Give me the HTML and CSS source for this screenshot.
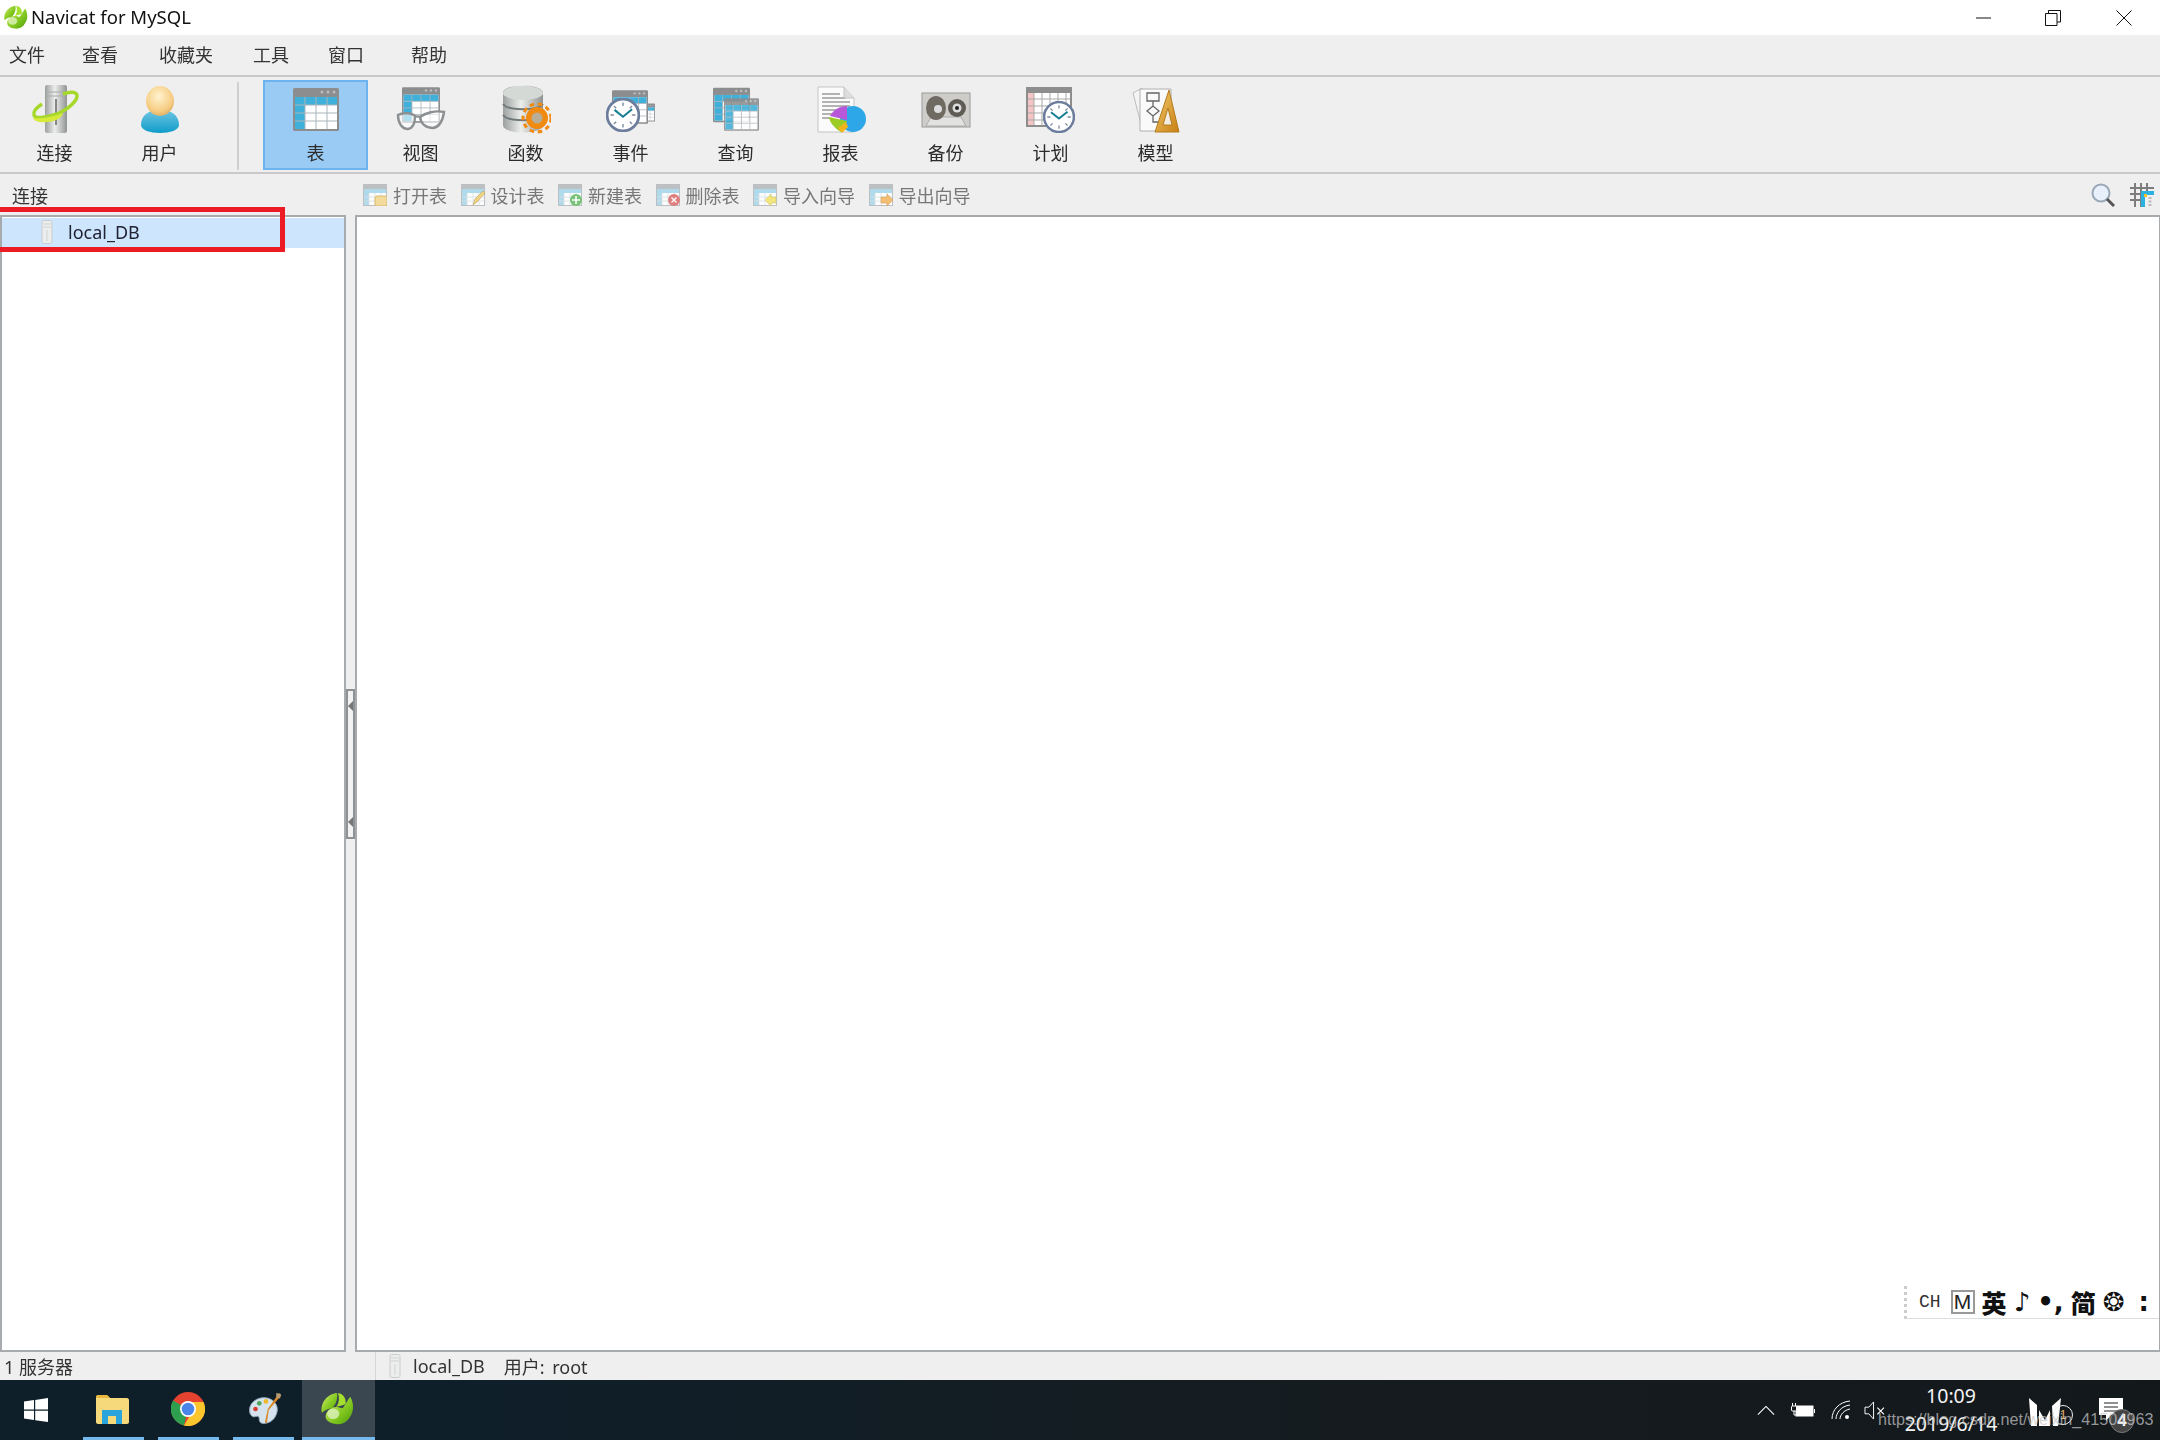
FILE: index.html
```html
<!DOCTYPE html>
<html lang="zh-CN">
<head>
<meta charset="utf-8">
<title>Navicat for MySQL</title>
<link rel="stylesheet" href="styles.css">
</head>
<body>
<svg class="defs" width="0" height="0" aria-hidden="true">
  <defs>
    <linearGradient id="steel" x1="0" x2="1" y1="0" y2="0">
      <stop offset="0" stop-color="#9b9f9d"/><stop offset=".45" stop-color="#eceeec"/><stop offset="1" stop-color="#8f9391"/>
    </linearGradient>
    <radialGradient id="peach" cx=".45" cy=".35" r=".7">
      <stop offset="0" stop-color="#fff3cf"/><stop offset=".7" stop-color="#f6cd83"/><stop offset="1" stop-color="#d9a860"/>
    </radialGradient>
    <linearGradient id="shoulder" x1="0" x2="0" y1="0" y2="1">
      <stop offset="0" stop-color="#6fc5e2"/><stop offset="1" stop-color="#0f9cc9"/>
    </linearGradient>
    <linearGradient id="leaf" x1="0" x2="1" y1="0" y2="1">
      <stop offset="0" stop-color="#d5f06a"/><stop offset=".6" stop-color="#7fc61d"/><stop offset="1" stop-color="#4e9a10"/>
    </linearGradient>
    <linearGradient id="ruler" x1="0" x2="1" y1="0" y2="1">
      <stop offset="0" stop-color="#f2cb6b"/><stop offset="1" stop-color="#c87f12"/>
    </linearGradient>
    <symbol id="tbl" viewBox="0 0 46 43">
      <rect width="46" height="43" rx="1.5" fill="#8b8d8e"/>
      <g fill="#bdbdbd"><circle cx="29" cy="4" r="1.5"/><circle cx="35" cy="4" r="1.5"/><circle cx="41" cy="4" r="1.5"/></g>
      <rect x="2" y="9" width="42" height="32" fill="#fff"/>
      <rect x="2" y="9" width="42" height="8" fill="#3fb0da"/>
      <rect x="2" y="17" width="10" height="24" fill="#3fb0da"/>
      <path d="M12 9v32M23 9v32M34 9v32M2 17h42M2 25h42M2 33h42" stroke="#a9b4ba" stroke-width="1" fill="none"/>
    </symbol>
    <symbol id="clock" viewBox="0 0 30 30">
      <circle cx="15" cy="15" r="14" fill="#fff" stroke="#6b7c9c" stroke-width="2.4"/>
      <path d="M15 4v3M15 23v3M4 15h3M23 15h3M7 7l2 2M23 7l-2 2M7 23l2-2M23 23l-2-2" stroke="#7d8aa0" stroke-width="1.2"/>
      <path d="M7.500 10.500 15 16.500 23 10" stroke="#167f93" stroke-width="1.800" fill="none"/>
    </symbol>
    <symbol id="navileaf" viewBox="0 0 36 36">
      <path d="M2 22C0 11 8 2 18 1c1 6-1 12-5 16-4 1-8 2-11 5z" fill="url(#leaf)"/>
      <path d="M19 1c6 1 9 6 8 12-3 1-7 2-10 3 3-4 4-9 2-15z" fill="#a6e02e"/>
      <path d="M32 5c4 7 4 15 0 21-3 6-9 9-15 8C7 33 4 27 7 22c3-5 8-7 12-6 3 1 5 2 6 0 2-3 4-7 7-11z" fill="url(#leaf)"/>
      <ellipse cx="14" cy="23" rx="6.500" ry="5.500" fill="#e8f6d2" opacity=".7"/>
    </symbol>
    <symbol id="mini" viewBox="0 0 24 22">
      <rect width="24" height="22" fill="#b4b8ba"/>
      <rect x="1" y="5" width="22" height="16" fill="#fff"/>
      <rect x="1" y="5" width="22" height="4" fill="#a3d6ea"/>
      <rect x="1" y="9" width="5" height="12" fill="#a3d6ea"/>
      <path d="M6 9v12M12 9v12M18 9v12M1 13h22M1 17h22" stroke="#d5dde0" stroke-width=".8"/>
    </symbol>
    <symbol id="server-mini" viewBox="0 0 12 24">
      <rect x="1" y="0.500" width="10" height="23" rx="1.500" fill="#eceeee" stroke="#c9cccc"/>
      <path d="M2 4h8M2 7h8M6 10v11" stroke="#d0d3d3"/>
    </symbol>
  </defs>
</svg>

<div class="window">
  <header class="titlebar">
    <svg class="title-logo" viewBox="0 0 36 36"><use href="#navileaf"/></svg>
    <span class="title-text">Navicat for MySQL</span>
    <div class="win-controls">
      <svg class="wc wc-min" viewBox="0 0 16 16"><path d="M0 8h15" stroke="#111" fill="none"/></svg>
      <svg class="wc wc-max" viewBox="0 0 16 16"><path d="M.5 3.500h11.500v12H.5zM3.500 3.500V.5h12v11.500H12" stroke="#111" fill="none"/></svg>
      <svg class="wc wc-close" viewBox="0 0 16 16"><path d="M.5.5l15 15M15.500.5l-15 15" stroke="#111" fill="none"/></svg>
    </div>
  </header>

  <nav class="menubar">
    <span>文件</span><span>查看</span><span>收藏夹</span><span>工具</span><span>窗口</span><span>帮助</span>
  </nav>

  <div class="toolbar">
    <button class="tool">
      <svg viewBox="0 0 50 50"><rect x="15" y="1" width="22" height="48" rx="2" fill="url(#steel)"/><path d="M16 8h20M16 12h20" stroke="#a8acaa"/><path d="M26 15v26" stroke="#666" stroke-width="1.500"/><path d="M33 10c8-3 13-2 14 1 1 5-8 14-20 19-12 4-22 5-23 1-1-3 2-7 8-11" fill="none" stroke="#a6d82b" stroke-width="3.500"/><path d="M3 34c8 1 20-1 30-5-1 5-7 8-15 9-7 1-13 0-15-4z" fill="#d6ea3a"/></svg>
      <span>连接</span>
    </button>
    <button class="tool">
      <svg viewBox="0 0 50 50"><path d="M6 41c0-10 8-15 19-15s19 5 19 15c0 5-9 8-19 8S6 46 6 41z" fill="url(#shoulder)"/><ellipse cx="25" cy="17" rx="14" ry="15" fill="url(#peach)"/></svg>
      <span>用户</span>
    </button>
    <div class="tool-sep"></div>
    <button class="tool tool-active">
      <svg viewBox="0 0 50 50"><use href="#tbl" x="2" y="4" width="46" height="43"/></svg>
      <span>表</span>
    </button>
    <button class="tool">
      <svg viewBox="0 0 50 50"><use href="#tbl" x="6" y="3" width="38" height="36"/><g fill="#fff" fill-opacity=".6" stroke="#8c9092" stroke-width="2.400"><path d="M2 31c5-3 14-2 17 1 0 6-1 12-7 13-6 0-10-6-10-14z"/><path d="M24 33c5-4 16-7 24-5-1 7-4 15-11 16-7 0-12-4-13-11z"/><path d="M19 33c2-1 3-1 5 0" fill="none"/></g></svg>
      <span>视图</span>
    </button>
    <button class="tool">
      <svg viewBox="0 0 50 50"><path d="M2 9c0-10 40-10 40 0v32c0 10-40 10-40 0z" fill="url(#steel)"/><ellipse cx="22" cy="9" rx="20" ry="7" fill="#d5d9d6"/><path d="M2 20c5 7 35 7 40 0M2 31c5 7 35 7 40 0" stroke="#70787a" stroke-width="2" fill="none"/><circle cx="36" cy="34" r="11" fill="#f08a10"/><circle cx="36" cy="34" r="14" fill="none" stroke="#f08a10" stroke-width="3" stroke-dasharray="4.500 3.800"/><circle cx="36" cy="34" r="5.500" fill="#b8ad96"/></svg>
      <span>函数</span>
    </button>
    <button class="tool">
      <svg viewBox="0 0 50 50"><use href="#tbl" x="30" y="12" width="19" height="33"/><use href="#tbl" x="6" y="2" width="36" height="42"/><use href="#clock" x="0" y="14" width="34" height="34"/></svg>
      <span>事件</span>
    </button>
    <button class="tool">
      <svg viewBox="0 0 50 50"><use href="#tbl" x="2" y="3" width="37" height="36"/><use href="#tbl" x="13" y="14" width="35" height="33" opacity=".88"/></svg>
      <span>查询</span>
    </button>
    <button class="tool">
      <svg viewBox="0 0 50 50"><path d="M2 3h26l10 11v34H2z" fill="#fbfbfb" stroke="#c4c4c4"/><path d="M6 10h18M6 14h24M6 18h28M6 22h28M6 26h20M6 30h12M6 34h8" stroke="#6a6a6a" stroke-width="1"/><path d="M28 3v11h10" fill="#ddd" stroke="#c4c4c4"/><ellipse cx="37" cy="35" rx="13" ry="13" fill="#2da7e8"/><path d="M31 22c-7 0-14 4-17 10l17 4z" fill="#b658d8"/><path d="M13 33l18 4-6 11c-5-3-11-8-12-15z" fill="#9ccb24"/><path d="M22 44l8-6 2 5-6 6z" fill="#f1b41c"/></svg>
      <span>报表</span>
    </button>
    <button class="tool">
      <svg viewBox="0 0 50 50"><rect x="1" y="9" width="48" height="34" fill="#cfcdc9" stroke="#9a9a9a"/><path d="M5 42l5-9h30l5 9z" fill="#e2e2e0" stroke="#aaa"/><ellipse cx="15" cy="24" rx="10" ry="12" fill="#6f6a62"/><circle cx="17" cy="25" r="4" fill="#ddd"/><circle cx="36" cy="24" r="9" fill="#5f5b55"/><circle cx="36" cy="24" r="4.500" fill="#ddd"/><circle cx="36" cy="24" r="2" fill="#222"/></svg>
      <span>备份</span>
    </button>
    <button class="tool">
      <svg viewBox="0 0 50 50"><rect x="1" y="4" width="44" height="38" fill="#fff" stroke="#8d8d8d" stroke-width="2"/><rect x="1" y="3" width="44" height="6" fill="#8d8d8d"/><rect x="2" y="9" width="6" height="32" fill="#f5c4c4"/><path d="M8 9v32M16 9v32M24 9v32M32 9v32M40 9v32M2 15h42M2 22h42M2 29h42M2 36h42" stroke="#a9a9a9"/><use href="#clock" x="17" y="17" width="32" height="32"/></svg>
      <span>计划</span>
    </button>
    <button class="tool">
      <svg viewBox="0 0 50 50"><path d="M2 9l9-5 6 42-6-2z" fill="#f4f4f4" stroke="#bbb"/><path d="M9 5h31v42H9z" fill="#fafafa" stroke="#b0b0b0"/><path d="M16 9h12v8H16zM22 17v5M16 27l6-5 6 5-6 5zM22 32v6h8" fill="none" stroke="#666" stroke-width="1.300"/><path d="M38 6l10 42H24z" fill="url(#ruler)" stroke="#b47c20"/><path d="M37 24l4 17h-9z" fill="#f2ede0" stroke="#b47c20"/></svg>
      <span>模型</span>
    </button>
  </div>

  <div class="subbar">
    <div class="sub-label">连接</div>
    <div class="actions">
      <span class="action"><svg viewBox="0 0 24 22"><use href="#mini"/><rect x="12" y="12" width="12" height="10" rx="2" fill="#f4d88e" stroke="#d5b35f"/></svg>打开表</span>
      <span class="action"><svg viewBox="0 0 24 22"><use href="#mini"/><path d="M12 21l2-6 8-8 2 2-8 9z" fill="#f0cf6f" stroke="#b99a4b" stroke-width=".7"/></svg>设计表</span>
      <span class="action"><svg viewBox="0 0 24 22"><use href="#mini"/><circle cx="18" cy="16" r="6" fill="#62bb63"/><path d="M18 12v8M14 16h8" stroke="#fff" stroke-width="1.600"/></svg>新建表</span>
      <span class="action"><svg viewBox="0 0 24 22"><use href="#mini"/><circle cx="18" cy="16" r="6" fill="#dc6a6a"/><path d="M15.500 13.500l5 5M20.500 13.500l-5 5" stroke="#fff" stroke-width="1.400"/></svg>删除表</span>
      <span class="action"><svg viewBox="0 0 24 22"><use href="#mini"/><path d="M12 16l6-6v3h5v6h-5v3z" fill="#f3e36c" stroke="#cfbd4a" stroke-width=".6"/></svg>导入向导</span>
      <span class="action"><svg viewBox="0 0 24 22"><use href="#mini"/><path d="M24 16l-6-6v3h-6v6h6v3z" fill="#f4b45e" stroke="#d29340" stroke-width=".6"/></svg>导出向导</span>
    </div>
    <div class="sub-tools">
      <svg viewBox="0 0 24 24"><circle cx="10" cy="10" r="8.500" fill="#e8f0fb" stroke="#9aa8b8" stroke-width="2"/><path d="M16 16l7 7" stroke="#555" stroke-width="3"/></svg>
      <svg viewBox="0 0 24 24"><path d="M5 0v24M11 0v24M17 0v8M0 5h24M0 11h12M0 17h12" stroke="#7d7d7d" stroke-width="2"/><path d="M11 8h13v4H15v12h-4z" fill="#2cb2e0"/><rect x="14" y="11" width="3" height="3" fill="#f3c327"/><path d="M20 14v9" stroke="#bbb" stroke-width="3" stroke-dasharray="2 1.500"/></svg>
    </div>
  </div>

  <main class="workspace">
    <aside class="tree">
      <div class="tree-row">
        <svg viewBox="0 0 12 24"><use href="#server-mini"/></svg>
        <span>local_DB</span>
      </div>
      <div class="highlight"></div>
    </aside>
    <div class="splitter-col">
      <div class="splitter">
        <i class="arrow"></i><i class="arrow"></i>
      </div>
    </div>
    <section class="content">
      <div class="ime">
        <span class="ime-ch">CH</span>
        <span class="ime-m">M</span>
        <span class="ime-b">英</span>
        <span class="ime-s">♪</span>
        <span class="ime-s">•,</span>
        <span class="ime-b">简</span>
        <span class="ime-s">❂</span>
        <span class="ime-s ime-end">:</span>
      </div>
    </section>
  </main>

  <footer class="statusbar">
    <span class="status-count">1 服务器</span>
    <div class="status-info">
      <svg viewBox="0 0 12 24"><use href="#server-mini"/></svg>
      <span>local_DB</span>
      <span class="status-user">用户: root</span>
    </div>
  </footer>

  <div class="taskbar">
    <div class="task-start">
      <svg viewBox="0 0 24 24"><path d="M0 3.500l10-1.400v9.400H0zM11.200 1.900L24 0v11.500H11.200zM0 12.700h10v9.300L0 20.500zM11.200 12.700H24V24l-12.800-1.800z" fill="#fff"/></svg>
    </div>
    <div class="task-app running">
      <svg viewBox="0 0 34 30"><path d="M1 3c0-1 1-2 2-2h9l3 3h17c1 0 2 1 2 2v22c0 1-1 2-2 2H3c-1 0-2-1-2-2z" fill="#f6d97a"/><path d="M1 3c0-1 1-2 2-2h9l3 3H1z" fill="#e9b93e"/><path d="M7 30V16h20v14h-6v-8h-8v8z" fill="#2aa4dd"/></svg>
    </div>
    <div class="task-app running">
      <svg viewBox="0 0 34 34"><circle cx="17" cy="17" r="17" fill="#e5432f"/><path d="M17 17L2 8.500A17 17 0 0 0 13 33.500z" fill="#2e9e4f"/><path d="M17 10h15.500A17 17 0 0 1 13 33.500L21 20z" fill="#fbc52c"/><circle cx="17" cy="17" r="8" fill="#fff"/><circle cx="17" cy="17" r="6.300" fill="#4a86ea"/></svg>
    </div>
    <div class="task-app running">
      <svg viewBox="0 0 36 36"><path d="M3 22C1 13 9 6 18 6c9 0 15 7 14 14-1 6-5 12-12 13-5 1-7-1-7-4s-1-4-4-3-5-1-6-4z" fill="#d4e3ee" stroke="#93aabb"/><circle cx="9" cy="18" r="2.500" fill="#d93c30"/><circle cx="13" cy="12" r="2.500" fill="#4da65a"/><circle cx="20" cy="10" r="2.500" fill="#f0b72d"/><path d="M34 1l2 3-13 15-2 14-2-1 3-14z" fill="#d98825"/><path d="M31 1l5 1-1 5-4-1z" fill="#b79c76"/></svg>
    </div>
    <div class="task-app task-current">
      <svg viewBox="0 0 36 36"><use href="#navileaf"/></svg>
    </div>
    <div class="tray">
      <svg class="tray-chev" viewBox="0 0 20 10"><path d="M1 9.500l9-9 9 9" fill="none" stroke="#fff" stroke-width="1.200"/></svg>
      <svg class="tray-batt" viewBox="0 0 24 14"><rect x="5" y="3" width="17" height="10" fill="#fff" stroke="#fff"/><rect x="23" y="6" width="1" height="4" fill="#fff"/><path d="M1.500 0v3M4.500 0v3M3 8v4h3" stroke="#fff" fill="none"/><rect x="0.500" y="3" width="5" height="5" rx="1" fill="#131a1e" stroke="#fff"/></svg>
      <svg class="tray-wifi" viewBox="0 0 20 20"><g fill="none" stroke="#fff" stroke-width="1"><path d="M1 19C1 10 8 2 19 1"/><path d="M5 19C5 13 10 6 19 5"/><path d="M9 19c0-4 4-9 10-10"/></g><circle cx="16" cy="17" r="2" fill="#fff"/></svg>
      <svg class="tray-vol" viewBox="0 0 22 20"><path d="M1 6.500h4L10 1v18l-5-5.500H1z" fill="none" stroke="#fff"/><path d="M14 7l7 7M21 7l-7 7" stroke="#fff" stroke-width="1.200"/></svg>
      <div class="clock"><span>10:09</span><span>2019/6/14</span></div>
      <div class="tray-m">
        <svg viewBox="0 0 32 28"><path d="M0 0l8 7v21H2zM32 0l-3 28h-5l-1-20zM10 12l6 10 5-10v16H10z" fill="#fff"/></svg>
        <b class="badge-one">1</b>
      </div>
      <div class="tray-note">
        <svg viewBox="0 0 24 23"><path d="M0 0h24v17H12l-5 6v-6H0z" fill="#fff"/><path d="M5 5h14M5 9h14M5 13h14" stroke="#222"/></svg>
        <b class="badge-four">4</b>
      </div>
    </div>
    <span class="watermark">https://blog.csdn.net/weixin_41504963</span>
  </div>
</div>
</body>
</html>
```

FILE: styles.css
```css
* { box-sizing: border-box; }
html, body { margin: 0; padding: 0; }
body {
  width: 2160px;
  height: 1440px;
  overflow: hidden;
  background: #efefef;
  font-family: "Noto Sans", "Noto Sans CJK SC", sans-serif;
  font-size: 18px;
  color: #222;
}
.defs { position: absolute; }
.window { display: flex; flex-direction: column; height: 1440px; }

/* Title bar */
.titlebar {
  height: 35px;
  background: #fff;
  display: flex;
  align-items: center;
  padding-left: 3px;
  flex: none;
}
.title-logo { width: 25px; height: 25px; filter: blur(.4px); }
.title-text { margin: -2px 0 0 3px; font-size: 18.500px; color: #111; filter: blur(.3px); }
.win-controls {
  margin-left: auto;
  width: 184px;
  display: flex;
  align-items: center;
  height: 35px;
}
.wc { width: 16px; height: 16px; flex: none; }
.wc-min { margin-right: 53px; }
.wc-max { margin-right: 55px; }

/* Menu */
.menubar {
  height: 42px;
  flex: none;
  display: grid;
  grid-template-columns: 73px 77px 94px 75px 83px auto;
  align-items: center;
  padding: 0 0 3px 9px;
  border-bottom: 2px solid #c9c9c9;
  color: #333;
}
.menubar span { filter: blur(.5px); }

/* Toolbar */
.toolbar {
  height: 97px;
  flex: none;
  display: flex;
  align-items: flex-start;
  padding: 3px 0 0 2px;
  border-bottom: 2px solid #c9c9c9;
}
.tool {
  width: 105px;
  height: 90px;
  flex: none;
  padding: 2px 0 0;
  border: 2px solid transparent;
  background: none;
  display: flex;
  flex-direction: column;
  align-items: center;
  font: inherit;
  color: #2c2c2c;
}
.tool svg { width: 50px; height: 50px; flex: none; filter: blur(.5px); }
.tool span { margin-top: 7px; line-height: 24px; filter: blur(.5px); }
.tool-active { background: #99cbf5; border-color: #6db3f0; }
.tool-sep {
  width: 2px;
  height: 88px;
  margin: 2px 24px 0 25px;
  background: #cfcfcf;
  flex: none;
}

/* Sub toolbar */
.subbar {
  height: 41px;
  flex: none;
  display: flex;
  align-items: center;
  padding: 0 6px 0 12px;
}
.sub-label { width: 351px; color: #333; filter: blur(.5px); flex: none; }
.actions { display: flex; gap: 13.500px; color: #777; }
.action { display: flex; align-items: center; gap: 6px; filter: blur(.5px); }
.action svg { width: 24px; height: 22px; flex: none; opacity: .85; }
.sub-tools { margin-left: auto; display: flex; gap: 15px; filter: blur(.4px); }
.sub-tools svg { width: 24px; height: 24px; }

/* Workspace */
.workspace { height: 1137px; flex: none; display: flex; }
.tree {
  width: 346px;
  flex: none;
  position: relative;
  background: #fff;
  border: 2px solid #a8abae;
  padding-top: 1px;
}
.tree-row {
  height: 30px;
  background: #cde6fd;
  display: flex;
  align-items: center;
  padding: 0 0 2px 39px;
  color: #223;
}
.tree-row svg { width: 12px; height: 24px; filter: blur(.4px); }
.tree-row span { margin-left: 15px; filter: blur(.3px); }
.highlight {
  position: absolute;
  left: -9px;
  top: -10px;
  width: 292px;
  height: 45px;
  border: 5px solid #ed1c24;
}
.splitter-col { width: 9px; flex: none; display: flex; align-items: center; }
.splitter {
  width: 9px;
  height: 150px;
  margin-top: -40px;
  border: 2px solid #8f9295;
  background: #f2f2f2;
  display: flex;
  flex-direction: column;
  justify-content: space-between;
  padding: 10px 0;
}
.arrow {
  width: 0;
  height: 0;
  border-style: solid;
  border-width: 5px 5px 5px 0;
  border-color: transparent #777 transparent transparent;
}
.content {
  flex: 1;
  position: relative;
  background: #fff;
  border: 2px solid #a8abae;
  border-right-width: 1px;
}
.ime {
  position: absolute;
  right: 0;
  bottom: 31px;
  width: 255px;
  height: 33px;
  border-left: 3px dotted #ccc;
  border-bottom: 1px solid #ddd;
  display: flex;
  align-items: center;
  gap: 7px;
  padding-left: 12px;
  color: #111;
  font-family: "Noto Sans CJK SC", sans-serif;
}
.ime-ch { font: 18px "Liberation Mono", monospace; color: #333; }
.ime-m {
  width: 24px;
  height: 24px;
  border: 2px solid #999;
  display: flex;
  align-items: center;
  justify-content: center;
  font: 21px "Liberation Sans", sans-serif;
  color: #222;
  margin-left: 3px;
}
.ime-b { font-size: 25px; font-weight: 900; line-height: 30px; }
.ime-s { font: bold 26px "DejaVu Sans", sans-serif; line-height: 30px; }
.ime-end { margin-left: 7px; }

/* Status bar */
.statusbar {
  height: 28px;
  flex: none;
  display: flex;
  align-items: center;
  color: #333;
  overflow: hidden;
}
.status-count { width: 375px; padding-left: 4px; filter: blur(.4px); flex: none; }
.status-info {
  display: flex;
  align-items: center;
  height: 28px;
  border-left: 1px solid #d6d6d6;
  padding-left: 13px;
  filter: blur(.3px);
}
.status-info svg { width: 12px; height: 24px; }
.status-info span { margin-left: 12px; }
.status-info .status-user { margin-left: 19px; word-spacing: 3px; }

/* Taskbar */
.taskbar {
  height: 60px;
  flex: none;
  position: relative;
  display: flex;
  background: linear-gradient(90deg, #0f1f2a 0, #0f1f2a 20%, #151c20 60%, #13181b 100%);
}
.task-start { width: 83px; display: flex; align-items: center; padding-left: 24px; flex: none; }
.task-start svg { width: 24px; height: 24px; }
.task-app {
  width: 61px;
  margin-right: 14px;
  flex: none;
  display: flex;
  align-items: center;
  justify-content: center;
  border-bottom: 3px solid #76b9ed;
}
.task-app svg { width: 34px; height: 34px; }
.task-app:nth-child(2) svg { margin-left: -3px; }
.task-app:nth-child(3) svg { margin-left: -2px; }
.task-current { width: 73px; margin: 0 0 0 -6px; background: #3b4750; }
.task-current svg { margin-left: -3px; }
.tray { flex: 1; position: relative; display: flex; align-items: center; padding-left: 1382px; }
.tray svg { flex: none; }
.tray-chev { width: 18px; height: 9px; margin-right: 16px; }
.tray-batt { width: 24px; height: 16px; margin-right: 16px; }
.tray-wifi { width: 20px; height: 20px; margin-right: 13px; }
.tray-vol { width: 21px; height: 19px; }
.clock {
  position: absolute;
  left: 1506px;
  top: 0;
  width: 140px;
  height: 60px;
  display: flex;
  flex-direction: column;
  align-items: center;
  font-size: 19.500px;
  line-height: 28px;
  color: #f4f4f4;
  padding-top: 2px;
}
.tray-m { position: absolute; left: 1654px; top: 18px; width: 32px; height: 28px; }
.tray-m svg { width: 32px; height: 28px; display: block; }
.tray-note { position: absolute; left: 1724px; top: 18px; width: 24px; height: 23px; }
.tray-note svg { width: 24px; height: 23px; display: block; }
.badge-one, .badge-four {
  position: absolute;
  border-radius: 50%;
  display: flex;
  align-items: center;
  justify-content: center;
}
.badge-one {
  left: 24px;
  top: 7px;
  width: 20px;
  height: 20px;
  border: 1px solid #eee;
  font: 12px "Liberation Sans", sans-serif;
  color: #e9b36a;
}
.badge-four {
  left: 11px;
  top: 11px;
  width: 24px;
  height: 24px;
  background: #444;
  border: 1px solid #777;
  font: bold 17px "Liberation Sans", sans-serif;
  color: #fff;
}
.watermark {
  position: absolute;
  left: 1878px;
  top: 30px;
  font: 16.200px "Liberation Sans", sans-serif;
  color: rgba(200, 200, 200, .72);
  white-space: nowrap;
}
```
